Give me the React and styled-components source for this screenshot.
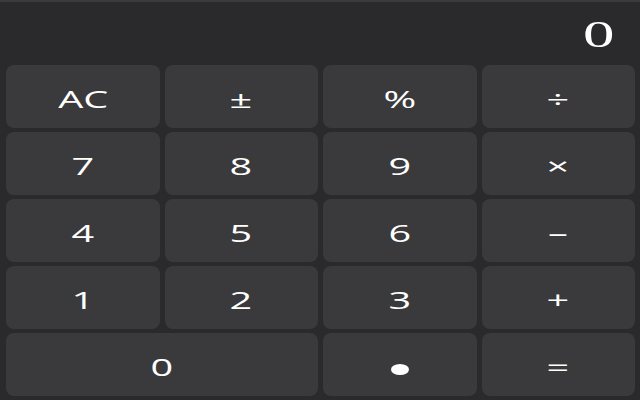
import React from "react";
import styled, { createGlobalStyle } from "styled-components";

const Global = createGlobalStyle`
  html, body { margin: 0; padding: 0; background: #2a2a2c; }
  * { box-sizing: border-box; }
`;

const Calculator = styled.div`
  width: 640px;
  height: 400px;
  background: #2a2a2c;
  border-top: 2px solid #3b3b3d;
  display: flex;
  flex-direction: column;
  overflow: hidden;
`;

const Display = styled.div`
  height: 63px;
  display: flex;
  align-items: center;
  justify-content: flex-end;
  padding: 2px 26px 0 0;
  color: #ffffff;
  font-family: "Liberation Serif", serif;
  font-size: 37px;
`;

const DisplayValue = styled.span`
  display: inline-block;
  transform: scaleX(1.7);
  transform-origin: right center;
`;

const Keypad = styled.div`
  flex: 1;
  display: grid;
  grid-template-columns: repeat(4, 1fr);
  grid-template-rows: repeat(5, 1fr);
  gap: 4px 5px;
  padding: 0 5px 4px 6px;
`;

const Key = styled.button`
  grid-column: span ${(p) => p.$span || 1};
  border: none;
  border-radius: 8px;
  background: #3a3a3c;
  color: #ffffff;
  font-family: "Open Sans", "Noto Sans", sans-serif;
  font-size: 24px;
  display: flex;
  align-items: center;
  justify-content: center;
  padding: 3px 0 0 0;
  cursor: pointer;
`;

const Label = styled.span`
  display: inline-block;
  transform: scaleX(1.65);
`;

const Dot = styled.span`
  display: block;
  width: 18px;
  height: 11px;
  border-radius: 50%;
  background: #ffffff;
  margin-top: 6px;
`;

const keys = [
  { l: "AC" }, { l: "±" }, { l: "%" }, { l: "÷" },
  { l: "7" }, { l: "8" }, { l: "9" }, { l: "×" },
  { l: "4" }, { l: "5" }, { l: "6" }, { l: "–" },
  { l: "1" }, { l: "2" }, { l: "3" }, { l: "+" },
  { l: "0", span: 2 }, { l: "dot" }, { l: "=" },
];

export default function App() {
  return (
    <>
      <Global />
      <Calculator>
        <Display>
          <DisplayValue>0</DisplayValue>
        </Display>
        <Keypad>
          {keys.map((k, i) => (
            <Key key={i} $span={k.span}>
              {k.l === "dot" ? <Dot /> : <Label>{k.l}</Label>}
            </Key>
          ))}
        </Keypad>
      </Calculator>
    </>
  );
}
